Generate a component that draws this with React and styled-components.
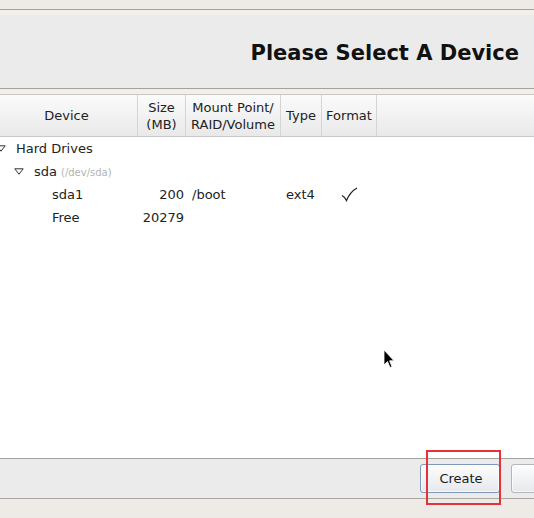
import React from "react";
import styled, { createGlobalStyle } from "styled-components";

const Global = createGlobalStyle`
  html, body { margin: 0; padding: 0; }
  body {
    background: #eeeae6;
    font-family: "DejaVu Sans", "Liberation Sans", sans-serif;
    color: #1a1a1a;
    overflow: hidden;
  }
`;

const Page = styled.div`
  position: relative;
  width: 534px;
  height: 518px;
  display: flex;
  flex-direction: column;
  overflow: hidden;
`;

const TopStrip = styled.div`
  height: 9px;
  flex: none;
  background: #eeeae6;
  border-bottom: 1px solid #a6a29e;
`;

const Spacer = styled.div`
  height: ${(p) => p.$h}px;
  flex: none;
  background: #f2eeea;
`;

const Banner = styled.div`
  height: 73px;
  flex: none;
  background: #ebebeb;
  border-bottom: 1px solid #a6a29e;
  display: flex;
  align-items: center;
  justify-content: flex-end;
  padding-right: 15px;
`;

const Title = styled.h1`
  margin: 0;
  font-size: 21px;
  font-weight: bold;
  color: #111;
  padding-top: 2px;
`;

const Table = styled.div`
  flex: 1;
  min-height: 0;
  background: #ffffff;
  display: flex;
  flex-direction: column;
  border-bottom: 1px solid #a6a29e;
`;

const cols = "138px 48px 95px 41px 55px 1fr";

const HeaderRow = styled.div`
  display: grid;
  grid-template-columns: ${cols};
  height: 43px;
  flex: none;
  background: linear-gradient(#fbfbfb, #e9e9e9);
  border-top: 1px solid #c9c7c4;
  border-bottom: 1px solid #c9c9c9;
  box-sizing: border-box;
`;

const HeadCell = styled.div`
  display: flex;
  align-items: center;
  justify-content: center;
  text-align: center;
  font-size: 13px;
  line-height: 17px;
  color: #222;
  border-right: ${(p) => (p.$last ? "none" : "1px solid #d4d4d4")};
  padding-top: 0;
  padding-right: ${(p) => p.$pr || 0}px;
`;

const Row = styled.div`
  display: grid;
  grid-template-columns: ${cols};
  height: 23px;
  flex: none;
  align-items: center;
  font-size: 13px;
  color: #222;
`;

const TreeCell = styled.div`
  display: flex;
  align-items: center;
  padding-left: ${(p) => p.$indent}px;
  white-space: nowrap;
`;

const Expander = styled.svg`
  width: 10px;
  height: 7px;
  margin-right: 10px;
  margin-left: ${(p) => p.$ml || 0}px;
  flex: none;
`;

const Hint = styled.span`
  font-size: 10px;
  color: #b3b3b3;
  margin-left: 4px;
  padding-top: 2px;
`;

const NumCell = styled.div`
  text-align: right;
  padding-right: 2px;
`;

const TextCell = styled.div`
  padding-left: ${(p) => p.$pl}px;
`;

const CheckCell = styled.div`
  display: flex;
  justify-content: center;
`;

const ButtonBar = styled.div`
  height: 39px;
  flex: none;
  background: #ebebeb;
  border-bottom: 1px solid #aaa6a2;
  display: flex;
  align-items: center;
  justify-content: flex-end;
  gap: 11px;
  margin-right: -57px;
`;

const Button = styled.button`
  height: 29px;
  width: ${(p) => p.$w}px;
  flex: none;
  border-radius: 3px;
  border: 1px solid ${(p) => (p.$focus ? "#7f98b8" : "#b5b5b5")};
  background: linear-gradient(#fdfdfd, #e6e8ec);
  font-family: "DejaVu Sans", sans-serif;
  font-size: 13px;
  color: #1a1a1a;
  padding: 0 0 0 2px;
  box-shadow: inset 0 0 0 1px rgba(255,255,255,0.7);
`;

const Bottom = styled.div`
  height: 19px;
  flex: none;
  background: #eeeae6;
`;

const Highlight = styled.div`
  position: absolute;
  left: 426px;
  top: 450px;
  width: 71px;
  height: 51px;
  border: 2px solid #e2333b;
  pointer-events: none;
`;

const Cursor = styled.svg`
  position: absolute;
  left: 383px;
  top: 349px;
  width: 12px;
  height: 20px;
`;

const Tri = ({ ml }) => (
  <Expander viewBox="0 0 10 7" $ml={ml}>
    <path d="M0.8 0.8 H9.2 L5 6.2 Z" fill="none" stroke="#333" strokeWidth="1" />
  </Expander>
);

export default function App() {
  return (
    <Page>
      <Global />
      <TopStrip />
      <Spacer $h={5} />
      <Banner>
        <Title>Please Select A Device</Title>
      </Banner>
      <Spacer $h={5} />
      <Table>
        <HeaderRow>
          <HeadCell $pr={4}>Device</HeadCell>
          <HeadCell>Size<br />(MB)</HeadCell>
          <HeadCell>Mount Point/<br />RAID/Volume</HeadCell>
          <HeadCell>Type</HeadCell>
          <HeadCell>Format</HeadCell>
          <HeadCell $last />
        </HeaderRow>
        <Row>
          <TreeCell $indent={0}>
            <Tri ml={-4} />
            Hard Drives
          </TreeCell>
        </Row>
        <Row>
          <TreeCell $indent={14}>
            <Tri />
            sda<Hint>(/dev/sda)</Hint>
          </TreeCell>
        </Row>
        <Row>
          <TreeCell $indent={52}>sda1</TreeCell>
          <NumCell>200</NumCell>
          <TextCell $pl={6}>/boot</TextCell>
          <TextCell $pl={5}>ext4</TextCell>
          <CheckCell>
            <svg width="17" height="15" viewBox="0 0 17 15">
              <path d="M1 8.5 C3 9.5 4.5 11 5.5 13.5 C8 7.5 11.5 3.5 16 1" fill="none" stroke="#222" strokeWidth="1.3" />
            </svg>
          </CheckCell>
        </Row>
        <Row>
          <TreeCell $indent={52}>Free</TreeCell>
          <NumCell>20279</NumCell>
        </Row>
      </Table>
      <ButtonBar>
        <Button $w={80} $focus>Create</Button>
        <Button $w={80} aria-label="Edit" />
      </ButtonBar>
      <Bottom />
      <Cursor viewBox="0 0 12 20">
        <path d="M1 1 V16 L4.5 12.5 L7 18.5 L9 17.6 L6.6 11.8 H11 Z" fill="#000" stroke="#fff" strokeWidth="0.8" />
      </Cursor>
      <Highlight />
    </Page>
  );
}
